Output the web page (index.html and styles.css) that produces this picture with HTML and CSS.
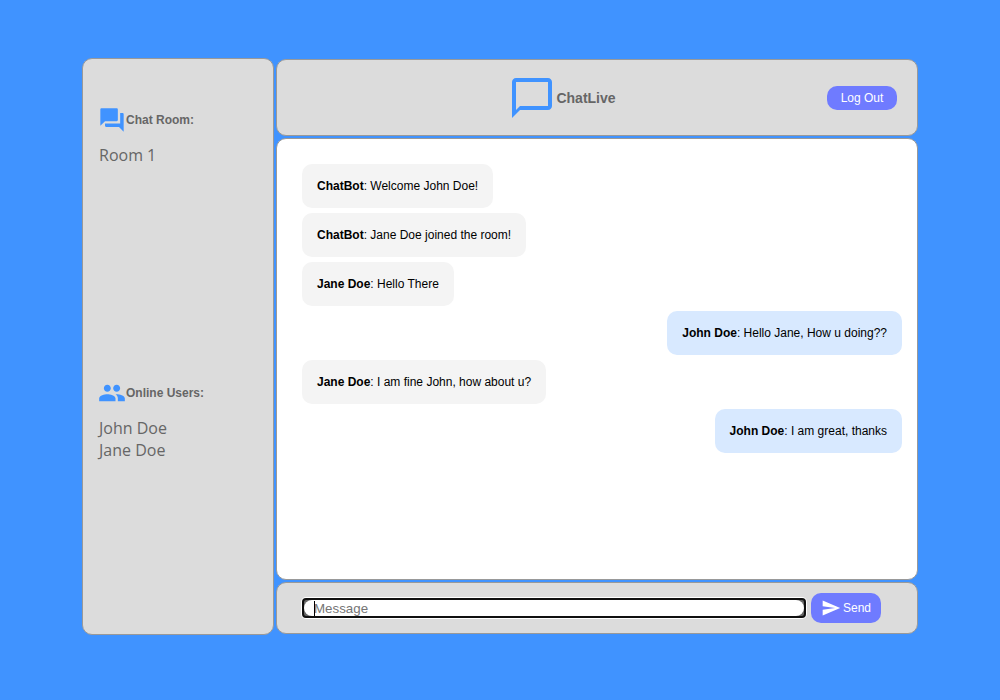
FILE: index.html
```html
<!DOCTYPE html>
<html lang="en">
<head>
<meta charset="utf-8">
<meta name="viewport" content="width=device-width, initial-scale=1">
<title>ChatLive</title>
<link rel="stylesheet" href="styles.css">
</head>
<body>
<div class="app">
  <aside class="sidebar">
    <section class="group">
      <h2 class="group-title">
        <svg class="group-icon" viewBox="0 0 24 24" aria-hidden="true"><path d="M21 6h-2v9H6v2c0 .55.45 1 1 1h11l4 4V7c0-.55-.45-1-1-1zm-4 6V3c0-.55-.45-1-1-1H3c-.55 0-1 .45-1 1v14l4-4h10c.55 0 1-.45 1-1z"/></svg>
        Chat Room:
      </h2>
      <p class="group-text">Room 1</p>
    </section>
    <section class="group">
      <h2 class="group-title">
        <svg class="group-icon" viewBox="0 0 24 24" aria-hidden="true"><path d="M16 11c1.66 0 2.99-1.34 2.99-3S17.66 5 16 5c-1.66 0-3 1.34-3 3s1.34 3 3 3zm-8 0c1.66 0 2.99-1.34 2.99-3S9.66 5 8 5C6.34 5 5 6.34 5 8s1.34 3 3 3zm0 2c-2.33 0-7 1.17-7 3.5V19h14v-2.5c0-2.33-4.67-3.5-7-3.5zm8 0c-.29 0-.62.02-.97.05 1.16.84 1.97 1.97 1.97 3.45V19h6v-2.5c0-2.33-4.67-3.5-7-3.5z"/></svg>
        Online Users:
      </h2>
      <ul class="group-text">
        <li>John Doe</li>
        <li>Jane Doe</li>
      </ul>
    </section>
  </aside>
  <main class="main">
    <header class="header">
      <h1 class="brand">
        <svg class="brand-icon" viewBox="0 0 24 24" aria-hidden="true"><path d="M20 2H4c-1.1 0-2 .9-2 2v18l4-4h14c1.1 0 2-.9 2-2V4c0-1.1-.9-2-2-2zm0 14H6l-2 2V4h16v12z"/></svg>
        ChatLive
      </h1>
      <button class="button logout" type="button">Log Out</button>
    </header>
    <div class="messages">
      <p class="message"><strong>ChatBot</strong>: Welcome John Doe!</p>
      <p class="message"><strong>ChatBot</strong>: Jane Doe joined the room!</p>
      <p class="message"><strong>Jane Doe</strong>: Hello There</p>
      <p class="message own"><strong>John Doe</strong>: Hello Jane, How u doing??</p>
      <p class="message"><strong>Jane Doe</strong>: I am fine John, how about u?</p>
      <p class="message own"><strong>John Doe</strong>: I am great, thanks</p>
    </div>
    <form class="composer">
      <div class="field">
        <input class="input" type="text" placeholder="Message" aria-label="Message" autofocus>
      </div>
      <button class="button send" type="submit">
        <svg class="send-icon" viewBox="0 0 24 24" aria-hidden="true"><path d="M2.01 21L23 12 2.01 3 2 10l15 2-15 2z"/></svg>
        Send
      </button>
    </form>
  </main>
</div>
</body>
</html>
```
FILE: styles.css
```css
* {
  box-sizing: border-box;
}

body {
  margin: 0;
  background: #4093ff;
  color: #000;
  font-family: "Liberation Sans", Arial, sans-serif;
  font-size: 12px;
  line-height: 14px;
}

h1, h2, p, ul {
  margin: 0;
  padding: 0;
}

.app {
  display: grid;
  grid-template-columns: 192px 1fr;
  gap: 2px;
  min-height: 100vh;
  padding: 58px 82px 65px;
}

.sidebar, .header, .messages, .composer {
  border: 1px solid #999;
  border-radius: 10px;
  background: #dcdcdc;
}

.sidebar {
  display: grid;
  grid-template-rows: 1fr 1fr;
  padding: 0 15px 29px;
  color: #666;
}

.group {
  padding-top: 47px;
}

.group-title {
  display: flex;
  align-items: center;
  margin-bottom: 10px;
  font-size: 12px;
}

.group-icon {
  width: 28px;
  height: 28px;
  fill: #4093ff;
}

.group-text {
  padding-left: 1px;
  font-family: "Segoe UI", "Open Sans", sans-serif;
  font-size: 16px;
  line-height: 22px;
  list-style: none;
}

.main {
  display: flex;
  flex-direction: column;
  gap: 2px;
  padding: 1px 0;
}

.header {
  display: flex;
  align-items: center;
  padding: 14px 20px 13px;
  color: #666;
}

.brand {
  display: flex;
  flex: 1;
  align-items: center;
  justify-content: center;
  font-size: 14px;
}

.brand-icon {
  width: 48px;
  height: 48px;
  fill: #4093ff;
}

.button {
  display: flex;
  align-items: center;
  justify-content: center;
  width: 70px;
  padding: 0;
  border: 0;
  border-radius: 10px;
  background: #6f7bff;
  color: #fff;
  font-family: inherit;
  font-size: 12px;
  font-weight: 500;
}

.logout {
  height: 24px;
}

.send {
  gap: 2px;
  height: 30px;
}

.send-icon {
  width: 20px;
  height: 20px;
  fill: #fff;
}

.messages {
  display: flex;
  flex: 1;
  flex-direction: column;
  align-items: flex-start;
  gap: 5px;
  padding: 25px 15px 25px 25px;
  background: #fff;
}

.message {
  padding: 15px;
  border-radius: 10px;
  background: #f4f4f4;
}

.own {
  align-self: flex-end;
  background: #d8e9ff;
}

.composer {
  display: flex;
  align-items: center;
  gap: 5px;
  padding: 10px 36px 10px 25px;
}

.field {
  position: relative;
  display: flex;
  flex: 1;
  height: 20px;
  border: 2px solid #101010;
  border-radius: 4px;
  background: #666;
  box-shadow: 0 0 0 1px #fff;
}

/* Steady text cursor while the field is focused and empty */
.field:has(.input:focus:placeholder-shown)::before {
  content: "";
  position: absolute;
  top: 1px;
  bottom: 0;
  left: 10px;
  width: 1px;
  background: #000;
}

.input {
  flex: 1;
  min-width: 0;
  padding: 0 10px;
  border: 0;
  border-radius: 8px;
  outline: 0;
  background: #fff;
  font-family: inherit;
}

.input:placeholder-shown {
  caret-color: transparent;
}
```
